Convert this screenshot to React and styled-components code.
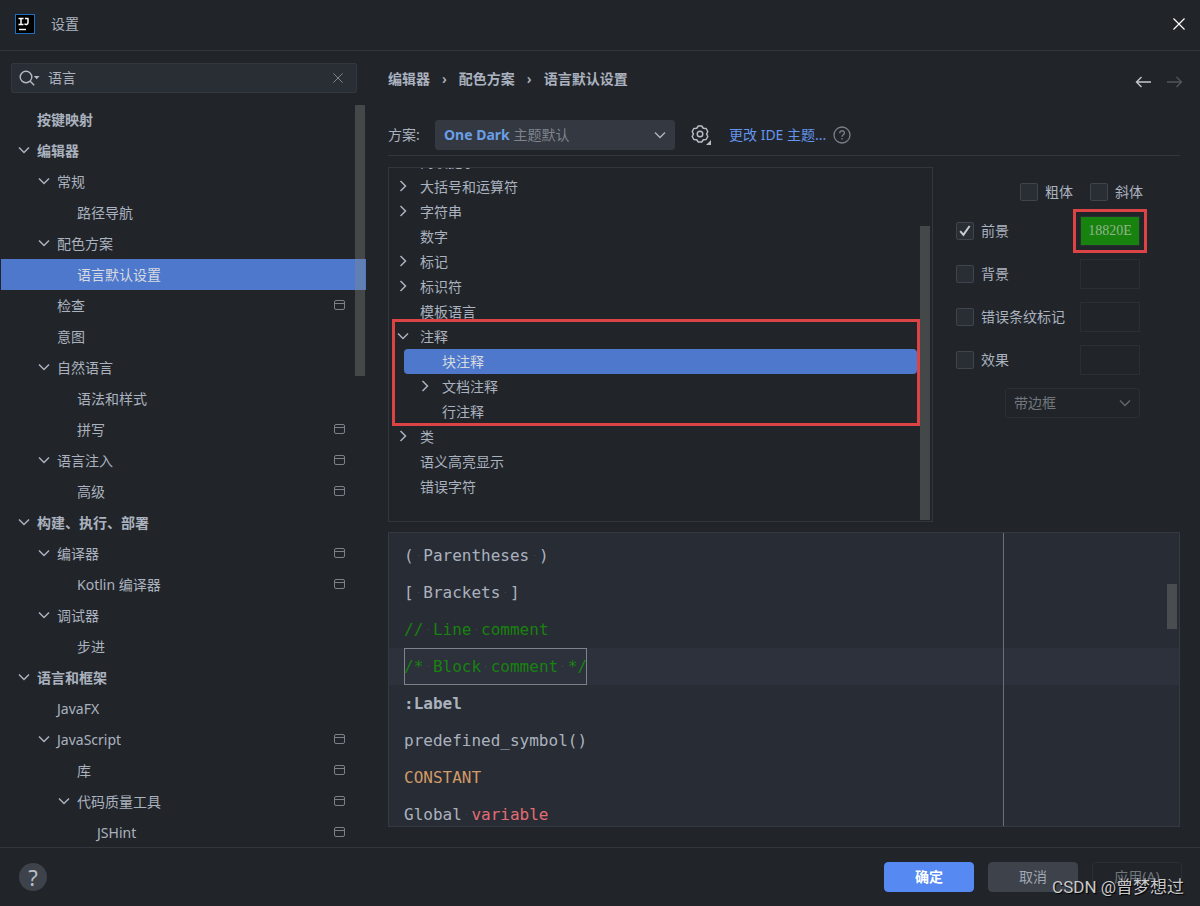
import React from "react";
import styled, { createGlobalStyle, css } from "styled-components";

const GlobalStyle = createGlobalStyle`
  * {
    box-sizing: border-box;
  }
  body {
    margin: 0;
    background: #21252a;
    color: #abb2bf;
    font-family: "Noto Sans", "Noto Sans CJK SC", sans-serif;
    font-size: 14px;
    line-height: 20px;
  }
  button, input, select {
    font: inherit;
    color: inherit;
  }
`;

const Window = styled.div`
  display: flex;
  flex-direction: column;
  height: 100vh;
  min-width: 960px;
  overflow: hidden;
  position: relative;
`;

const TitleBar = styled.header`
  display: flex;
  align-items: center;
  flex: none;
  height: 51px;
  padding: 0 15px 2px;
  border-bottom: 1px solid #33373c;
`;

const Title = styled.h1`
  margin: 0 auto 0 15px;
  font-size: 14px;
  font-weight: 400;
`;

const IconButton = styled.button`
  display: flex;
  align-items: center;
  justify-content: center;
  padding: 0;
  border: 0;
  background: none;
  cursor: pointer;
  &:disabled {
    cursor: default;
  }
`;

const Main = styled.main`
  display: flex;
  flex: 1;
  min-height: 0;
`;

const Sidebar = styled.aside`
  display: flex;
  flex-direction: column;
  flex: none;
  width: 366px;
  padding-top: 12px;
`;

const SearchBox = styled.div`
  display: flex;
  align-items: center;
  flex: none;
  gap: 7px;
  height: 30px;
  margin: 0 9px 11px 11px;
  padding: 0 13px 0 7px;
  background: #292d34;
  border: 1px solid #333740;
  border-radius: 2px;
`;

const SearchInput = styled.input`
  flex: 1;
  min-width: 0;
  padding: 0;
  border: 0;
  outline: 0;
  background: none;
`;

const NavArea = styled.nav`
  flex: 1;
  min-height: 0;
  overflow: hidden;
  position: relative;
`;

const NavList = styled.ul`
  margin: 0;
  padding: 0 0 0 1px;
  list-style: none;
`;

const NavItem = styled.li`
  display: flex;
  align-items: center;
  gap: 5px;
  height: 31px;
  padding: 0 20px 0 ${(p) => 15 + p.$depth * 20}px;
  font-weight: ${(p) => (p.$bold ? 600 : 400)};
  ${(p) =>
    p.$selected &&
    css`
      background: #4d78cc;
      color: #d7dae0;
    `}
`;

const ItemLabel = styled.span`
  flex: 1;
`;

const ArrowSlot = styled.span`
  display: flex;
  align-items: center;
  justify-content: center;
  flex: none;
  width: 16px;
  height: 18px;
  padding-bottom: 2px;
`;

const ScrollThumb = styled.div`
  position: absolute;
  right: ${(p) => p.$right}px;
  top: ${(p) => p.$top}px;
  width: 10px;
  height: ${(p) => p.$height}px;
  background: rgba(140, 140, 136, 0.34);
`;

const Content = styled.section`
  display: flex;
  flex-direction: column;
  flex: 1;
  min-width: 0;
  padding: 16px 20px 20px 22px;
`;

const ContentHeader = styled.div`
  display: flex;
  align-items: center;
  justify-content: space-between;
  flex: none;
  height: 24px;
  margin-bottom: 29px;
`;

const Breadcrumbs = styled.ol`
  display: flex;
  align-items: center;
  gap: 12px;
  margin: 0;
  padding: 0;
  list-style: none;
  font-weight: 600;
`;

const Crumb = styled.li`
  display: flex;
  align-items: center;
  gap: 12px;
`;

const History = styled.div`
  display: flex;
  gap: 16px;
  margin-right: -3px;
  padding-top: 6px;
`;

const SchemeRow = styled.div`
  display: flex;
  align-items: center;
  flex: none;
  height: 36px;
  padding-bottom: 5px;
  margin-bottom: 11px;
  border-bottom: 1px solid #33373c;
`;

const SchemeLabel = styled.label`
  width: 47px;
`;

const ComboBox = styled.div`
  display: flex;
  align-items: center;
  justify-content: space-between;
  position: relative;
  width: ${(p) => p.$width}px;
  height: 30px;
  padding: 0 8px;
  border-radius: 3px;
  border: 1px solid ${(p) => (p.$off ? "#2b2f34" : "#333841")};
  background: ${(p) => (p.$off ? "none" : "#333841")};
  color: ${(p) => (p.$off ? "#72777d" : "#7f848c")};
`;

const ComboSelect = styled.select`
  position: absolute;
  inset: 0;
  width: 100%;
  height: 100%;
  opacity: 0;
`;

const SchemeName = styled.b`
  font-weight: 700;
  color: #6a9fe6;
`;

const GearButton = styled(IconButton)`
  margin: 0 16px 0 15px;
`;

const ThemeLink = styled.a`
  margin-right: 7px;
  color: #6494ed;
  text-decoration: none;
`;

const Upper = styled.div`
  display: flex;
  flex: 1;
  min-height: 0;
  margin-bottom: 10px;
`;

const TreePanel = styled.div`
  position: relative;
  flex: 1;
  border: 1px solid #33373c;
  overflow: hidden;
`;

// scrolled down a little, so the first row is mostly hidden
const TreeList = styled.ul`
  margin: -19px 0 0;
  padding: 0;
  list-style: none;
`;

const TreeItem = styled.li`
  display: flex;
  align-items: center;
  gap: 9px;
  height: 25px;
  padding-left: ${(p) => 6 + p.$depth * 22 - (p.$selected ? 15 : 0)}px;
  ${(p) =>
    p.$selected &&
    css`
      margin: 0 15px;
      border-radius: 4px;
      background: #4d78cc;
      color: #d7dae0;
    `}
`;

const Highlight = styled.div`
  position: absolute;
  border: 3px solid #dc4345;
  pointer-events: none;
`;

const TreeHighlight = styled(Highlight)`
  left: 3px;
  right: 12px;
  top: 151px;
  height: 107px;
`;

const SwatchHighlight = styled(Highlight)`
  inset: -7px;
`;

const Options = styled.form`
  display: flex;
  flex-direction: column;
  gap: 13px;
  flex: none;
  width: 247px;
  padding: 13px 40px 0 23px;
`;

const FontStyles = styled.div`
  display: flex;
  justify-content: flex-end;
  gap: 17px;
  height: 23px;
  margin-right: -3px;
`;

const OptionRow = styled.div`
  display: flex;
  align-items: center;
  justify-content: ${(p) => (p.$end ? "flex-end" : "space-between")};
  height: 30px;
`;

const CheckLabel = styled.label`
  display: flex;
  align-items: center;
  gap: 7px;
  height: 24px;
`;

const CheckWrap = styled.span`
  display: grid;
  width: 18px;
  height: 18px;
  svg {
    grid-area: 1 / 1;
    margin: auto;
    pointer-events: none;
  }
`;

const CheckInput = styled.input`
  grid-area: 1 / 1;
  appearance: none;
  width: 18px;
  height: 18px;
  margin: 0;
  background: #292d34;
  border: 1px solid #40444c;
  border-radius: 2px;
`;

const SwatchWrap = styled.div`
  position: relative;
  width: 60px;
  height: 30px;
`;

const Swatch = styled.input`
  display: block;
  width: 60px;
  height: 30px;
  padding: 0;
  border: 1px solid #2b2f34;
  outline: 0;
  background: ${(p) => p.$color || "none"};
  color: #8fb58b;
  text-align: center;
  font-family: "Liberation Serif", serif;
  font-size: 14px;
`;

const Editor = styled.div`
  position: relative;
  flex: none;
  height: 295px;
  padding-top: 4px;
  border: 1px solid #353940;
  background: #282c34;
  font-family: "DejaVu Sans Mono", monospace;
  font-size: 16px;
  overflow: hidden;
`;

const CodeLine = styled.div`
  height: 37px;
  padding-left: 15px;
  line-height: 37px;
  white-space: pre;
  background: ${(p) => (p.$current ? "#2c313c" : "none")};
`;

const Token = styled.span`
  color: ${(p) => p.$color || "#abb2bf"};
  font-weight: ${(p) => (p.$bold ? 700 : 400)};
  ${(p) =>
    p.$boxed &&
    css`
      display: inline-block;
      height: 37px;
      box-shadow: inset 0 0 0 1px #7d828b;
    `}
`;

// visible whitespace: a faint dot in the middle of every space
const Space = styled.span`
  background: linear-gradient(#454a54, #454a54) center / 1px 1px no-repeat;
`;

const RightMargin = styled.div`
  position: absolute;
  top: 0;
  bottom: 0;
  left: 614px;
  width: 1px;
  background: #6b7078;
`;

const Footer = styled.footer`
  display: flex;
  align-items: center;
  flex: none;
  gap: 14px;
  height: 59px;
  padding: 0 18px 1px 19px;
  border-top: 1px solid #33373c;
`;

const HelpButton = styled.button`
  width: 28px;
  height: 28px;
  margin-right: auto;
  padding: 0;
  border: 0;
  border-radius: 50%;
  background: #3d424b;
  color: #b9bec8;
  font-size: 22px;
  line-height: 28px;
`;

const DialogButton = styled.button`
  width: 90px;
  height: 30px;
  padding: 0;
  border: 1px solid #2b2f34;
  border-radius: 4px;
  background: none;
  color: #72777d;
  ${(p) =>
    p.$kind === "primary" &&
    css`
      border-color: #568af2;
      background: #568af2;
      color: #fff;
      font-weight: 600;
    `}
  ${(p) =>
    p.$kind === "plain" &&
    css`
      border-color: #3d424b;
      background: #3d424b;
      color: #a0a7b4;
    `}
`;

const Watermark = styled.div`
  position: absolute;
  right: 16px;
  bottom: 7px;
  font-family: Roboto, "Noto Sans CJK SC", sans-serif;
  font-size: 17px;
  line-height: 24px;
  color: #c9cacc;
  text-shadow: 1px 1px 1px #000;
  pointer-events: none;
`;

function ChevronDown({ color = "#abb2bf" }) {
  return (
    <svg width="12" height="12" viewBox="0 0 12 12" fill="none" stroke={color} strokeWidth="1.5">
      <path d="M1 3.5L6 8.5L11 3.5" />
    </svg>
  );
}

function ChevronRight() {
  return (
    <svg width="12" height="12" viewBox="0 0 12 12" fill="none" stroke="#abb2bf" strokeWidth="1.5">
      <path d="M3.5 1L8.5 6L3.5 11" />
    </svg>
  );
}

function Arrow({ state }) {
  return (
    <ArrowSlot>
      {state === "open" && <ChevronDown />}
      {state === "closed" && <ChevronRight />}
    </ArrowSlot>
  );
}

function AppLogo() {
  return (
    <svg width="21" height="20" viewBox="0 0 21 20" fill="none">
      <rect x="0.5" y="0.5" width="19" height="19" fill="#000" stroke="#1d6fc4" />
      <path d="M3.5 4.5H8.5M6 4.5V10.5M3.5 10.5H8.5M10 4.5H13.5M13 4.5V8.5C13 10.8 10.6 11 9.6 9.6" stroke="#fff" strokeWidth="1.5" />
      <path d="M4 15.5H11" stroke="#fff" strokeWidth="1.4" />
    </svg>
  );
}

function SearchIcon() {
  return (
    <svg width="22" height="16" viewBox="0 0 22 16" fill="none">
      <circle cx="7" cy="7" r="5.8" stroke="#b4bac4" strokeWidth="1.4" />
      <path d="M11 11L15.2 15.2" stroke="#b4bac4" strokeWidth="1.4" />
      <path d="M14.8 6H20.6L17.7 9.2Z" fill="#b4bac4" />
    </svg>
  );
}

function Cross({ size, color }) {
  return (
    <svg width={size} height={size} viewBox="0 0 10 10" fill="none" stroke={color}>
      <path d="M0.4 0.4L9.6 9.6M9.6 0.4L0.4 9.6" />
    </svg>
  );
}

function ProjectIcon() {
  return (
    <svg width="12" height="11" viewBox="0 0 12 11" fill="none" stroke="#7c8189">
      <rect x="0.5" y="0.5" width="10" height="9" rx="1.5" />
      <path d="M1 3.5H10.5" />
    </svg>
  );
}

function HistoryArrow({ forward }) {
  return (
    <svg width="16" height="12" viewBox="0 0 16 12" fill="none" stroke={forward ? "#50555b" : "#c3c7cd"} strokeWidth="1.4">
      <path d={forward ? "M0 6H14.5M9.5 1L14.5 6L9.5 11" : "M16 6H1.5M6.5 1L1.5 6L6.5 11"} />
    </svg>
  );
}

function GearIcon() {
  return (
    <svg width="23" height="22" viewBox="0 0 23 22" fill="none">
      <path
        d="M8.3 2L11.7 2L13.3 4.3L16.1 4.5L17.8 7.5L16.6 10L17.8 12.5L16.1 15.5L13.3 15.7L11.7 18L8.3 18L6.7 15.7L3.9 15.5L2.2 12.5L3.4 10L2.2 7.5L3.9 4.5L6.7 4.3Z"
        stroke="#b9bec6"
        strokeWidth="1.5"
        strokeLinejoin="round"
      />
      <circle cx="10" cy="10" r="2.8" stroke="#b9bec6" strokeWidth="1.4" />
      <path d="M21 16V21H16Z" fill="#b9bec6" />
    </svg>
  );
}

function HintIcon() {
  return (
    <svg width="18" height="18" viewBox="0 0 18 18" fill="none" stroke="#7c8189" strokeWidth="1.3">
      <circle cx="9" cy="9" r="8" />
      <path d="M6.7 7.2C6.7 4 11.4 4 11.4 7C11.4 8.8 9 8.8 9 10.8M9 12V13.5" />
    </svg>
  );
}

function CheckMark() {
  return (
    <svg width="14" height="14" viewBox="0 0 14 14" fill="none" stroke="#c8ccd4" strokeWidth="2">
      <path d="M2.2 7.2L5.4 10.8L11.6 2" />
    </svg>
  );
}

const settings = [
  { text: "按键映射", depth: 0, bold: true },
  { text: "编辑器", depth: 0, bold: true, arrow: "open" },
  { text: "常规", depth: 1, arrow: "open" },
  { text: "路径导航", depth: 2 },
  { text: "配色方案", depth: 1, arrow: "open" },
  { text: "语言默认设置", depth: 2, selected: true },
  { text: "检查", depth: 1, project: true },
  { text: "意图", depth: 1 },
  { text: "自然语言", depth: 1, arrow: "open" },
  { text: "语法和样式", depth: 2 },
  { text: "拼写", depth: 2, project: true },
  { text: "语言注入", depth: 1, arrow: "open", project: true },
  { text: "高级", depth: 2, project: true },
  { text: "构建、执行、部署", depth: 0, bold: true, arrow: "open" },
  { text: "编译器", depth: 1, arrow: "open", project: true },
  { text: "Kotlin 编译器", depth: 2, project: true },
  { text: "调试器", depth: 1, arrow: "open" },
  { text: "步进", depth: 2 },
  { text: "语言和框架", depth: 0, bold: true, arrow: "open" },
  { text: "JavaFX", depth: 1 },
  { text: "JavaScript", depth: 1, arrow: "open", project: true },
  { text: "库", depth: 2, project: true },
  { text: "代码质量工具", depth: 2, arrow: "open", project: true },
  { text: "JSHint", depth: 3, project: true },
];

const attributes = [
  { text: "内联提示", depth: 0 },
  { text: "大括号和运算符", depth: 0, arrow: "closed" },
  { text: "字符串", depth: 0, arrow: "closed" },
  { text: "数字", depth: 0 },
  { text: "标记", depth: 0, arrow: "closed" },
  { text: "标识符", depth: 0, arrow: "closed" },
  { text: "模板语言", depth: 0 },
  { text: "注释", depth: 0, arrow: "open" },
  { text: "块注释", depth: 1, selected: true },
  { text: "文档注释", depth: 1, arrow: "closed" },
  { text: "行注释", depth: 1 },
  { text: "类", depth: 0, arrow: "closed" },
  { text: "语义高亮显示", depth: 0 },
  { text: "错误字符", depth: 0 },
];

const code = [
  { tokens: [{ text: "( Parentheses )" }] },
  { tokens: [{ text: "[ Brackets ]" }] },
  { tokens: [{ text: "// Line comment", color: "#18820e" }] },
  { current: true, tokens: [{ text: "/* Block comment */", color: "#18820e", boxed: true }] },
  { tokens: [{ text: ":Label", bold: true }] },
  { tokens: [{ text: "predefined_symbol()" }] },
  { tokens: [{ text: "CONSTANT", color: "#d19a66" }] },
  { tokens: [{ text: "Global " }, { text: "variable", color: "#e06c75" }] },
];

function CodeToken({ token }) {
  return (
    <Token $color={token.color} $bold={token.bold} $boxed={token.boxed}>
      {token.text.split(/( )/).map((part, i) => (part === " " ? <Space key={i}> </Space> : part))}
    </Token>
  );
}

function Check({ label, checked = false }) {
  return (
    <CheckLabel>
      <CheckWrap>
        <CheckInput type="checkbox" defaultChecked={checked} />
        {checked && <CheckMark />}
      </CheckWrap>
      {label}
    </CheckLabel>
  );
}

function ColorOption({ label, color }) {
  return (
    <OptionRow>
      <Check label={label} checked={Boolean(color)} />
      <SwatchWrap>
        <Swatch type="text" aria-label={label} $color={color && `#${color}`} defaultValue={color} disabled={!color} />
        {color && <SwatchHighlight />}
      </SwatchWrap>
    </OptionRow>
  );
}

export default function App() {
  return (
    <>
      <GlobalStyle />
      <Window>
        <TitleBar>
          <AppLogo />
          <Title>设置</Title>
          <IconButton aria-label="关闭">
            <Cross size={12} color="#fff" />
          </IconButton>
        </TitleBar>
        <Main>
          <Sidebar>
            <SearchBox>
              <SearchIcon />
              <SearchInput type="text" aria-label="搜索" defaultValue="语言" />
              <IconButton aria-label="清除">
                <Cross size={10} color="#80858d" />
              </IconButton>
            </SearchBox>
            <NavArea>
              <NavList>
                {settings.map((item) => (
                  <NavItem key={item.text} $depth={item.depth} $bold={item.bold} $selected={item.selected}>
                    <Arrow state={item.arrow} />
                    <ItemLabel>{item.text}</ItemLabel>
                    {item.project && <ProjectIcon />}
                  </NavItem>
                ))}
              </NavList>
              <ScrollThumb $right={1} $top={1} $height={271} />
            </NavArea>
          </Sidebar>
          <Content>
            <ContentHeader>
              <Breadcrumbs>
                <Crumb>编辑器</Crumb>
                <Crumb>
                  <span>›</span>配色方案
                </Crumb>
                <Crumb>
                  <span>›</span>语言默认设置
                </Crumb>
              </Breadcrumbs>
              <History>
                <IconButton aria-label="后退">
                  <HistoryArrow />
                </IconButton>
                <IconButton aria-label="前进" disabled>
                  <HistoryArrow forward />
                </IconButton>
              </History>
            </ContentHeader>
            <SchemeRow>
              <SchemeLabel htmlFor="scheme">方案:</SchemeLabel>
              <ComboBox $width={240}>
                <span>
                  <SchemeName>One Dark</SchemeName> 主题默认
                </span>
                <ChevronDown />
                <ComboSelect id="scheme">
                  <option>One Dark</option>
                </ComboSelect>
              </ComboBox>
              <GearButton aria-label="方案操作">
                <GearIcon />
              </GearButton>
              <ThemeLink href="#theme">更改 IDE 主题...</ThemeLink>
              <HintIcon />
            </SchemeRow>
            <Upper>
              <TreePanel>
                <TreeList>
                  {attributes.map((item) => (
                    <TreeItem key={item.text} $depth={item.depth} $selected={item.selected}>
                      <Arrow state={item.arrow} />
                      {item.text}
                    </TreeItem>
                  ))}
                </TreeList>
                <TreeHighlight />
                <ScrollThumb $right={2} $top={58} $height={294} />
              </TreePanel>
              <Options>
                <FontStyles>
                  <Check label="粗体" />
                  <Check label="斜体" />
                </FontStyles>
                <ColorOption label="前景" color="18820E" />
                <ColorOption label="背景" />
                <ColorOption label="错误条纹标记" />
                <ColorOption label="效果" />
                <OptionRow $end>
                  <ComboBox $width={135} $off>
                    <span>带边框</span>
                    <ChevronDown color="#60656c" />
                    <ComboSelect aria-label="效果类型" disabled>
                      <option>带边框</option>
                    </ComboSelect>
                  </ComboBox>
                </OptionRow>
              </Options>
            </Upper>
            <Editor>
              {code.map((line, i) => (
                <CodeLine key={i} $current={line.current}>
                  {line.tokens.map((token) => (
                    <CodeToken key={token.text} token={token} />
                  ))}
                </CodeLine>
              ))}
              <RightMargin />
              <ScrollThumb $right={2} $top={51} $height={45} />
            </Editor>
          </Content>
        </Main>
        <Footer>
          <HelpButton aria-label="帮助">?</HelpButton>
          <DialogButton $kind="primary">确定</DialogButton>
          <DialogButton $kind="plain">取消</DialogButton>
          <DialogButton disabled>应用(A)</DialogButton>
        </Footer>
        <Watermark>CSDN @曾梦想过</Watermark>
      </Window>
    </>
  );
}
